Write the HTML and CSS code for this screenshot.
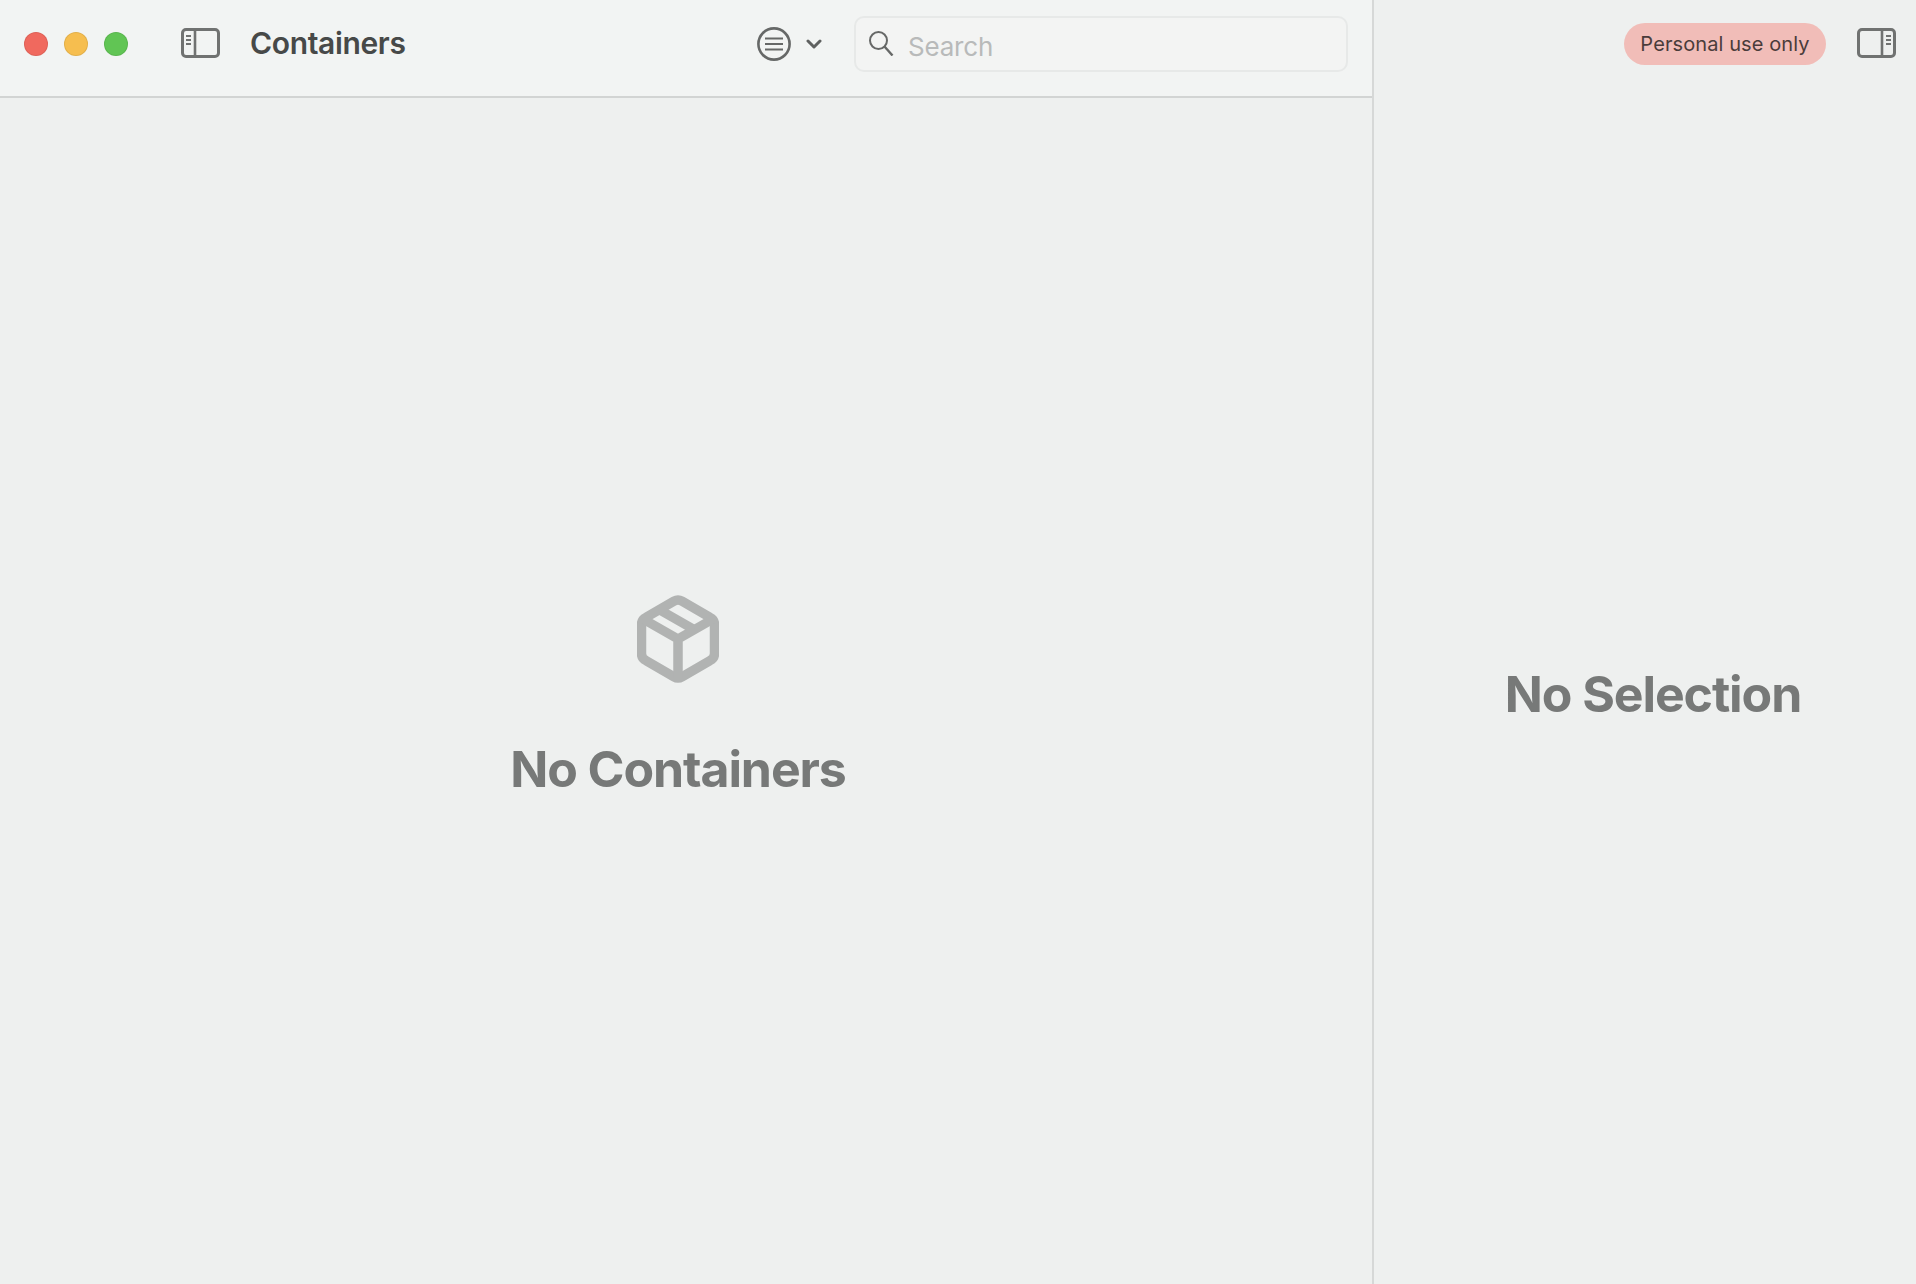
FILE: index.html
```html
<!DOCTYPE html>
<html lang="en">
<head>
  <meta charset="UTF-8" />
  <title>Containers</title>
  <link rel="stylesheet" href="styles.css">
</head>
<body>
  <div class="app">
    <main class="list-pane">
      <header class="toolbar">
        <div class="traffic">
          <span class="dot red"></span>
          <span class="dot yellow"></span>
          <span class="dot green"></span>
        </div>
        <svg class="sidebar-icon" width="39" height="30" viewBox="0 0 39 30" fill="none" stroke="#707271">
          <rect x="1.5" y="1.5" width="36" height="27" rx="3.5" stroke-width="3"/>
          <path d="M14 1.5v27" stroke-width="2.6"/>
          <path d="M5 8h5M5 12h5M5 16h5" stroke-width="1.8"/>
        </svg>
        <h1 class="title">Containers</h1>
        <svg class="menu-icon" width="34" height="34" viewBox="0 0 34 34" fill="none" stroke="#666867">
          <circle cx="17" cy="17" r="15.6" stroke-width="2.6"/>
          <path d="M8 11.5h18M8 17h18M8 22.5h18" stroke-width="2.2"/>
        </svg>
        <svg class="chevron" width="16" height="10" viewBox="0 0 16 10" fill="none" stroke="#5f6160" stroke-width="3" stroke-linecap="round" stroke-linejoin="round">
          <path d="M2 2l6 6 6-6"/>
        </svg>
        <div class="search">
          <svg width="26" height="26" viewBox="0 0 26 26" fill="none" stroke="#666867" stroke-width="2">
            <circle cx="10.5" cy="10.5" r="8.500"/>
            <path d="M16.500 16.500l8 9" stroke-width="2.4"/>
          </svg>
          <span class="search-text">Search</span>
        </div>
      </header>
      <section class="empty empty-left">
        <svg class="box-icon" width="82" height="88" viewBox="0 0 82 88" fill="none" stroke="#b1b3b2" stroke-width="9.500" stroke-linejoin="round" stroke-linecap="round">
          <path d="M37 6.2a8 8 0 0 1 8 0L73 22.4a8 8 0 0 1 4.500 7v29.200a8 8 0 0 1-4.500 7L45 81.800a8 8 0 0 1-8 0L9 65.600a8 8 0 0 1-4.500-7V29.400a8 8 0 0 1 4.500-7z"/>
          <path d="M6 24l35 20 35-20M41 44v39" stroke-linecap="butt"/>
          <path d="M22 14.500l35 20" stroke-linecap="butt"/>
        </svg>
        <h2 class="empty-title">No Containers</h2>
      </section>
    </main>
    <aside class="detail-pane">
      <header class="detail-bar">
        <span class="badge">Personal use only</span>
        <svg class="sidebar-icon" width="39" height="30" viewBox="0 0 39 30" fill="none" stroke="#707271">
          <rect x="1.5" y="1.5" width="36" height="27" rx="3.5" stroke-width="3"/>
          <path d="M25 1.5v27" stroke-width="2.6"/>
          <path d="M29 8h5M29 12h5M29 16h5" stroke-width="1.8"/>
        </svg>
      </header>
      <section class="empty empty-right">
        <h2 class="empty-title">No Selection</h2>
      </section>
    </aside>
  </div>
</body>
</html>
```

FILE: styles.css
```css
* {
  margin: 0;
  padding: 0;
  box-sizing: border-box;
}

body {
  font-family: 'Inter', 'Liberation Sans', sans-serif;
  background-color: #eef0ef;
  overflow: hidden;
}

.app {
  display: flex;
  width: 1916px;
  height: 1284px;
}

.list-pane {
  width: 1374px;
  display: flex;
  flex-direction: column;
  border-right: 2px solid #d6d8d7;
}

.toolbar {
  height: 98px;
  flex-shrink: 0;
  display: flex;
  align-items: center;
  padding: 0 24px 9px 24px;
  background-color: #f2f4f3;
  border-bottom: 2px solid #d2d4d3;
}

.traffic {
  display: flex;
  gap: 16px;
  margin-right: 53px;
}

.dot {
  width: 24px;
  height: 24px;
  border-radius: 50%;
  border: 1px solid rgba(0, 0, 0, 0.08);
}

.red { background-color: #f0695e; }
.yellow { background-color: #f6be4f; }
.green { background-color: #61c554; }

.sidebar-icon {
  margin-bottom: 1px;
}

.title {
  margin-left: 30px;
  margin-bottom: 1px;
  font-size: 30px;
  font-weight: 600;
  letter-spacing: -0.35px;
  color: #474948;
}

.menu-icon {
  margin-left: auto;
}

.chevron {
  margin-left: 15px;
  margin-right: 32px;
}

.search {
  width: 494px;
  height: 56px;
  display: flex;
  align-items: center;
  gap: 14px;
  padding-left: 12px;
  background-color: #f3f4f3;
  border: 2px solid #e7e9e8;
  border-radius: 10px;
}

.search svg {
  margin-bottom: 2px;
}

.search-text {
  font-size: 26px;
  letter-spacing: -0.2px;
  color: #b8baba;
  padding-top: 5px;
}

.empty {
  flex: 1;
  display: flex;
  flex-direction: column;
  align-items: center;
}

.empty-left {
  padding: 497px 16px 0 0;
}

.empty-right {
  padding: 577px 0 0 16px;
}

.empty-title {
  font-size: 50px;
  font-weight: 700;
  line-height: 60px;
  letter-spacing: -1.1px;
  color: #777978;
}

.box-icon {
  margin-bottom: 56px;
}

.detail-pane {
  flex: 1;
  display: flex;
  flex-direction: column;
}

.detail-bar {
  height: 87px;
  display: flex;
  align-items: center;
  justify-content: flex-end;
  gap: 31px;
  padding-right: 20px;
}

.badge {
  width: 202px;
  height: 42px;
  display: flex;
  align-items: center;
  justify-content: center;
  border-radius: 21px;
  background-color: #f1bdb8;
  color: #4a3c3b;
  font-size: 20px;
  letter-spacing: 0.1px;
}
```
